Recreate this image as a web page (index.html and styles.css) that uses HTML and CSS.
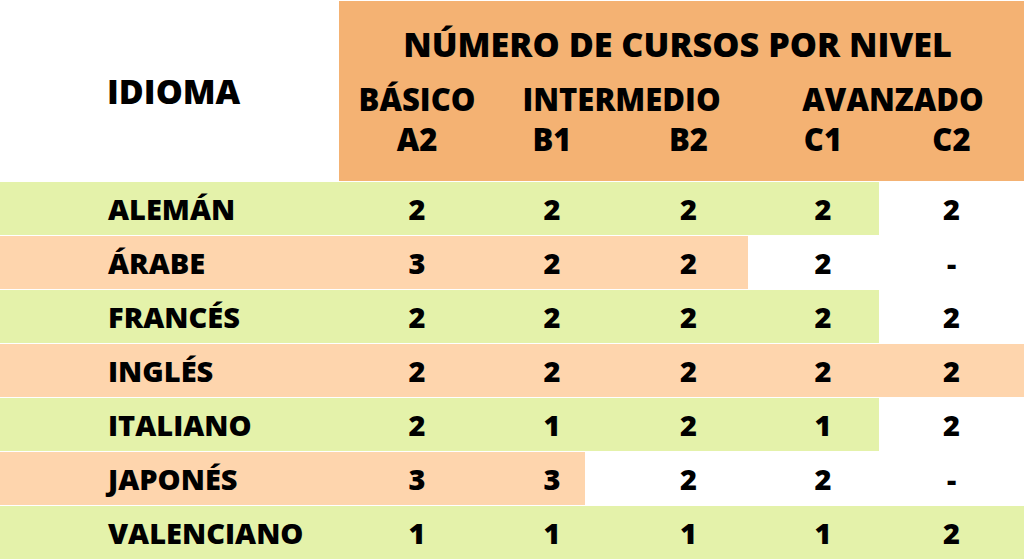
FILE: index.html
```html
<!DOCTYPE html>
<html lang="es">
<head>
<meta charset="utf-8">
<title>Número de cursos por nivel</title>
<link rel="stylesheet" href="styles.css">
</head>
<body>
<div class="table">
  <div class="head-lang">IDIOMA</div>
  <div class="head-main">
    <div class="title">NÚMERO DE CURSOS POR NIVEL</div>
    <div class="levels">
      <div class="lvl">BÁSICO</div>
      <div class="lvl span2">INTERMEDIO</div>
      <div class="lvl span2 adv">AVANZADO</div>
      <div class="lvl">A2</div>
      <div class="lvl b1">B1</div>
      <div class="lvl b2">B2</div>
      <div class="lvl c1">C1</div>
      <div class="lvl">C2</div>
    </div>
  </div>

  <div class="cell lang g">ALEMÁN</div>
  <div class="cell g">2</div><div class="cell b1 g">2</div><div class="cell b2 g">2</div><div class="cell c1 g">2</div><div class="cell w">2</div>

  <div class="cell lang p">ÁRABE</div>
  <div class="cell p">3</div><div class="cell b1 p">2</div><div class="cell b2 p">2</div><div class="cell c1 w">2</div><div class="cell w">-</div>

  <div class="cell lang g">FRANCÉS</div>
  <div class="cell g">2</div><div class="cell b1 g">2</div><div class="cell b2 g">2</div><div class="cell c1 g">2</div><div class="cell w">2</div>

  <div class="cell lang p">INGLÉS</div>
  <div class="cell p">2</div><div class="cell b1 p">2</div><div class="cell b2 p">2</div><div class="cell c1 p">2</div><div class="cell p">2</div>

  <div class="cell lang g">ITALIANO</div>
  <div class="cell g">2</div><div class="cell b1 g">1</div><div class="cell b2 g">2</div><div class="cell c1 g">1</div><div class="cell w">2</div>

  <div class="cell lang p">JAPONÉS</div>
  <div class="cell p">3</div><div class="cell b1 p">3</div><div class="cell b2 w">2</div><div class="cell c1 w">2</div><div class="cell w">-</div>

  <div class="cell lang g">VALENCIANO</div>
  <div class="cell g">1</div><div class="cell b1 g">1</div><div class="cell b2 g">1</div><div class="cell c1 g">1</div><div class="cell g">2</div>
</div>
</body>
</html>
```
FILE: styles.css
```css
* { box-sizing: border-box; }
html, body { margin: 0; padding: 0; background: #ffffff; }
body {
  font-family: "Open Sans", "Liberation Sans", sans-serif;
  font-weight: 800;
  color: #000;
  width: 1024px;
  height: 559px;
  overflow: hidden;
}
.table {
  display: grid;
  grid-template-columns: 339px 156px 90px 163px 131px 145px;
  grid-template-rows: 181px repeat(7, 53px);
  row-gap: 1px;
  background: #ffffff;
}
.head-lang {
  display: flex;
  align-items: center;
  padding-left: 107px;
  font-size: 34px;
}
.head-main {
  grid-column: 2 / 7;
  background: #f4b273;
  margin-top: 1px;
  padding-top: 19px;
}
.title {
  text-align: center;
  font-size: 34.2px;
  padding-right: 8px;
}
.levels {
  display: grid;
  grid-template-columns: 156px 90px 163px 131px 145px;
  grid-auto-rows: 40px;
  margin-top: 12px;
  font-size: 31px;
  line-height: 40px;
}
.lvl { text-align: center; white-space: nowrap; }
.span2 { grid-column: span 2; }
.adv { padding-left: 14px; }
.cell {
  display: flex;
  align-items: center;
  justify-content: center;
  font-size: 29px;
}
.cell.lang { justify-content: flex-start; padding-left: 108px; }
.b1 { padding-left: 24px; }
.b2 { padding-left: 44px; }
.c1 { padding-left: 19px; }
.g { background: #e4f2aa; }
.p { background: #fed5ad; }
.w { background: #ffffff; }
```
